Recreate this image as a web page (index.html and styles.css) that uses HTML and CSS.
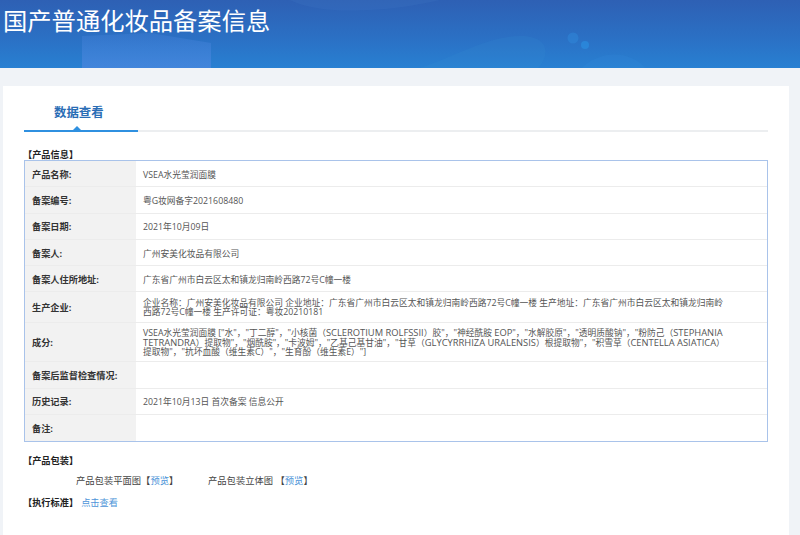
FILE: index.html
```html
<!DOCTYPE html>
<html lang="zh-CN">
<head>
<meta charset="utf-8">
<title>国产普通化妆品备案信息</title>
<link rel="stylesheet" href="styles.css">
</head>
<body>
<header class="banner">
  <svg class="banner-art" viewBox="0 0 800 68" preserveAspectRatio="none" aria-hidden="true">
    <defs>
      <linearGradient id="fade" x1="0" y1="0" x2="0" y2="1">
        <stop offset="0" stop-color="#4a86de" stop-opacity=".25"/>
        <stop offset="1" stop-color="#4a86de" stop-opacity=".75"/>
      </linearGradient>
    </defs>
    <path d="M82 36 L150 33 L211 43 L211 68 L82 68 Z" fill="url(#fade)"/>
    <path d="M290 0 C320 16 390 12 440 0 Z" fill="#5a90d8" fill-opacity=".1"/>
    <path d="M420 68 C460 54 490 36 520 36 C550 36 550 55 538 68 Z" fill="#3a98d8" fill-opacity=".14"/>
    <path d="M582 68 C600 50 630 50 645 68 Z" fill="#3a98e0" fill-opacity=".14"/>
    <circle cx="573" cy="38" r="5.5" fill="#2f86d8" fill-opacity=".55"/>
    <circle cx="585" cy="45" r="4" fill="#2b8de0" fill-opacity=".7"/>
  </svg>
  <h1 class="banner-title">国产普通化妆品备案信息</h1>
</header>
<main class="card">
  <nav class="tabs">
    <div class="tab">数据查看</div>
  </nav>
  <h2 class="section-title info-title">【产品信息】</h2>
  <section class="info-table">
    <div class="row h26"><div class="label">产品名称:</div><div class="value">VSEA水光莹润面膜</div></div>
    <div class="row h26"><div class="label">备案编号:</div><div class="value">粤G妆网备字2021608480</div></div>
    <div class="row h26"><div class="label">备案日期:</div><div class="value">2021年10月09日</div></div>
    <div class="row h26"><div class="label">备案人:</div><div class="value">广州安美化妆品有限公司</div></div>
    <div class="row h26"><div class="label">备案人住所地址:</div><div class="value">广东省广州市白云区太和镇龙归南岭西路72号C幢一楼</div></div>
    <div class="row h31"><div class="label">生产企业:</div><div class="value multi">企业名称：广州安美化妆品有限公司 企业地址：广东省广州市白云区太和镇龙归南岭西路72号C幢一楼 生产地址：广东省广州市白云区太和镇龙归南岭<br>西路72号C幢一楼 生产许可证：粤妆20210181</div></div>
    <div class="row h39"><div class="label">成分:</div><div class="value multi">VSEA水光莹润面膜 ["水"，"丁二醇"，"小核菌（<span class="en">SCLEROTIUM ROLFSSII</span>）胶"，"神经酰胺 <span class="en">EOP</span>"，"水解胶原"，"透明质酸钠"，"粉防己（<span class="en">STEPHANIA</span><br><span class="en">TETRANDRA</span>）提取物"，"烟酰胺"，"卡波姆"，"乙基己基甘油"，"甘草（<span class="en">GLYCYRRHIZA URALENSIS</span>）根提取物"，"积雪草（<span class="en">CENTELLA ASIATICA</span>）<br>提取物"，"抗坏血酸（维生素C）"，"生育酚（维生素E）"]</div></div>
    <div class="row h26"><div class="label">备案后监督检查情况:</div><div class="value"></div></div>
    <div class="row h26"><div class="label">历史记录:</div><div class="value">2021年10月13日 首次备案 信息公开</div></div>
    <div class="row h26 last"><div class="label">备注:</div><div class="value"></div></div>
  </section>
  <h2 class="section-title pack-title">【产品包装】</h2>
  <div class="pack-row">
    <span class="pack-item">产品包装平面图【<a class="link" href="#">预览</a>】</span>
    <span class="pack-item">产品包装立体图 【<a class="link" href="#">预览</a>】</span>
  </div>
  <div class="standard">
    <h2 class="section-title">【执行标准】</h2>
    <a class="link" href="#">点击查看</a>
  </div>
</main>
</body>
</html>
```
FILE: styles.css
```css
* { box-sizing: border-box; }
html, body { margin: 0; height: 535px; overflow: hidden; }
body {
  background: #f0f3f7;
  font-family: "Open Sans", "Noto Sans CJK SC", sans-serif;
  font-size: 8.75px;
  color: #555;
}
.banner {
  position: relative;
  height: 68px;
  background: linear-gradient(180deg, #2e60b4 0%, #2b70c4 55%, #2880d2 100%);
  overflow: hidden;
}
.banner-art { position: absolute; inset: 0; width: 100%; height: 100%; }
.banner-title {
  position: relative;
  margin: 0;
  padding: 3px 0 0 3px;
  font-size: 24.3px;
  line-height: 36px;
  font-weight: 400;
  color: #fff;
}
.card {
  margin: 18px 11px 0 3px;
  height: 449px;
  background: #fff;
  padding: 0 21px;
}
.tabs {
  height: 46px;
  border-bottom: 2px solid #eceef0;
}
.tab {
  position: relative;
  width: 114px;
  height: 46px;
  padding: 20px 0 0 30px;
  font-size: 12.4px;
  line-height: 14px;
  font-weight: 700;
  color: #2a6db5;
  border-bottom: 2px solid #2f90e0;
}
.tab::after {
  content: "";
  position: absolute;
  left: 49px;
  bottom: 0;
  border: 4px solid transparent;
  border-top-width: 0;
  border-bottom-color: #2f90e0;
}
.section-title {
  margin: 0;
  font-size: 9.2px;
  line-height: 10px;
  font-weight: 700;
  color: #222;
}
.info-title { margin-top: 18px; margin-left: -1px; }
.info-table {
  width: 744px;
  border: 1.5px solid #a9c3ea;
}
.row {
  display: flex;
  border-bottom: 1px solid #ececec;
}
.row.last { border-bottom: 0; }
.h26 { height: 26.3px; }
.h31 { height: 31px; }
.h39 { height: 39px; }
.label {
  width: 111px;
  flex: none;
  display: flex;
  align-items: center;
  padding: 0 0 0 7px;
  background: #f2f2f2;
  font-size: 9.2px;
  font-weight: 700;
  color: #333;
  white-space: nowrap;
}
.value {
  flex: 1;
  display: flex;
  align-items: center;
  padding: 1px 0 0 7px;
  white-space: nowrap;
}
.value.multi {
  display: block;
  align-self: center;
  line-height: 9px;
}
.en { font-size: 9.35px; }
.pack-title { margin-top: 14px; margin-left: -1px; }
.pack-row {
  display: flex;
  margin-top: 10px;
  padding-left: 52px;
  font-size: 9.3px;
  line-height: 10px;
  color: #444;
}
.pack-item { width: 132px; white-space: nowrap; }
.link { color: #4d94d8; text-decoration: none; }
.standard {
  display: flex;
  gap: 3px;
  margin-top: 12px;
  margin-left: -1px;
  font-size: 9.2px;
  line-height: 10px;
}
```
